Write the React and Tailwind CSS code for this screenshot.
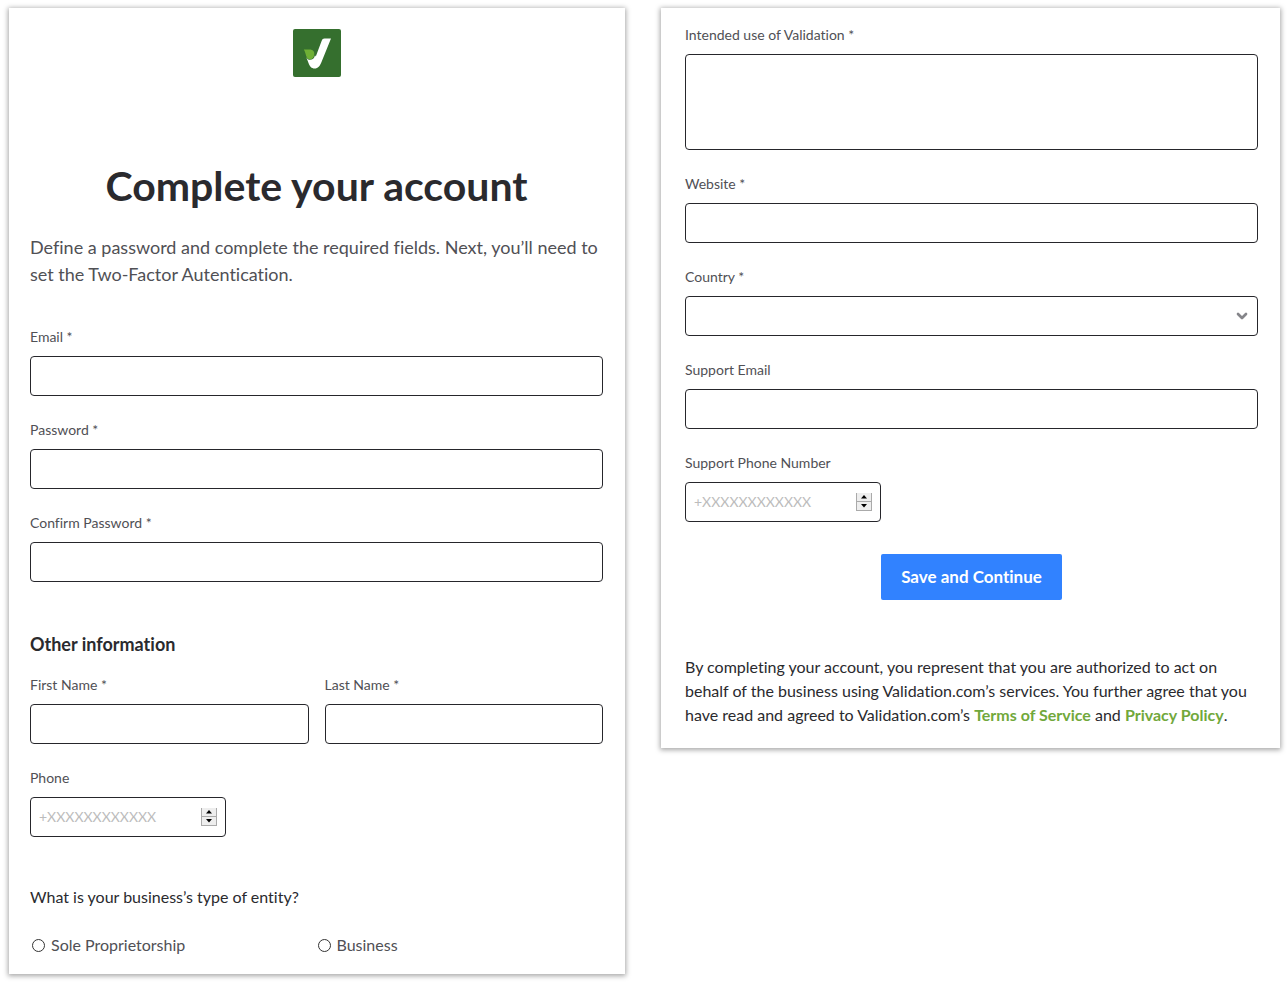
import { useId } from "react";
import { ChevronDown } from "lucide-react";

const control =
  "block w-full rounded border border-[#26262b] bg-white px-2 text-base text-[#2a2a2e] outline-none focus:border-[#3182ff]";

function Field({ label, children }) {
  const id = useId();
  return (
    <div className="flex flex-col gap-2.5">
      <label htmlFor={id} className="text-[14px] leading-[19px] text-[#505055]">
        {label}
      </label>
      {children(id)}
    </div>
  );
}

function TextField({ label, type = "text" }) {
  return (
    <Field label={label}>{(id) => <input id={id} type={type} className={`${control} h-10`} />}</Field>
  );
}

function Stepper({ label, up }) {
  return (
    <button
      type="button"
      aria-label={label}
      className="flex h-[9px] w-4 items-center justify-center border-x border-b border-[#aaaaaa] bg-[#eeeeee]"
    >
      <svg width="6" height="4" viewBox="0 0 6 4" fill="#000" aria-hidden="true">
        {up ? <path d="M3 0 6 3.5H0Z" /> : <path d="M0 0H6L3 3.5Z" />}
      </svg>
    </button>
  );
}

function PhoneField({ label }) {
  return (
    <Field label={label}>
      {(id) => (
        <div className="flex h-10 w-[196px] items-center rounded border border-[#26262b] px-2">
          <input
            id={id}
            type="tel"
            placeholder="+XXXXXXXXXXXX"
            className="h-5 min-w-0 flex-1 text-[14px] leading-5 text-[#2a2a2e] outline-none placeholder:text-[#bcbcbc]"
          />
          <div className="flex flex-col">
            <Stepper label="Increase" up />
            <Stepper label="Decrease" />
          </div>
        </div>
      )}
    </Field>
  );
}

function Radio({ label }) {
  return (
    <label className="flex items-center gap-1.5 text-base leading-6 text-[#505055]">
      <input
        type="radio"
        name="entity"
        className="size-[13px] appearance-none rounded-full border border-[#333333] bg-white checked:border-4"
      />
      {label}
    </label>
  );
}

function Logo() {
  return (
    <svg className="size-12" viewBox="0 0 48 48" role="img" aria-label="Validation">
      <rect width="48" height="48" rx="2" fill="#356f2e" />
      <path
        d="M31.5 9.5H38L28.5 33C26.8 37.3 25 39.5 21.7 39.5C18.3 39.5 16.8 37.3 15.5 34L13.2 28C14.2 30 15.4 30.8 17 30.8C19.5 30.8 21.4 29.2 22 26.2L22.8 27.5L28.6 12C29.2 10.3 30 9.5 31.5 9.5Z"
        fill="#fff"
      />
      <path
        d="M10.8 20.6H16.6C20 20.6 21.5 22.8 21.3 25.2C21.1 28.2 19.3 30.3 17 30.3C14.8 30.3 13.9 29 13.2 27C12.5 25 12.1 22.4 10.8 20.6Z"
        fill="#6faf35"
      />
    </svg>
  );
}

const panel = "bg-white pr-[22px] shadow-[0_1px_5px_1px_rgba(0,0,0,0.35)]";

export default function App() {
  return (
    <form
      className="grid min-h-screen grid-cols-1 items-start gap-9 bg-white py-2 pr-2 pl-[9px] font-['Lato','Open_Sans',sans-serif] [font-variant-ligatures:none] md:grid-cols-[616fr_619fr]"
      onSubmit={(e) => e.preventDefault()}
    >
      <section className={`${panel} pt-[21px] pb-[17px] pl-[21px]`}>
        <div className="flex justify-center">
          <Logo />
        </div>
        <h1 className="mt-20 text-center text-[41px] leading-[58px] font-bold text-[#2a2a2e]">
          Complete your account
        </h1>
        <p className="mt-[19px] text-[18px] leading-[27px] text-[#505055]">
          Define a password and complete the required fields. Next, you’ll need to set the Two-Factor
          Autentication.
        </p>

        <div className="mt-[39px] flex flex-col gap-6">
          <TextField label="Email *" type="email" />
          <TextField label="Password *" type="password" />
          <TextField label="Confirm Password *" type="password" />
        </div>

        <h2 className="mt-12 mb-[17px] text-[18px] leading-[28px] font-bold text-[#2a2a2e]">
          Other information
        </h2>
        <div className="flex flex-col gap-6">
          <div className="grid grid-cols-2 gap-4">
            <TextField label="First Name *" />
            <TextField label="Last Name *" />
          </div>
          <PhoneField label="Phone" />
        </div>

        <fieldset className="mt-12">
          <legend className="text-base leading-6 text-[#2a2a2e]">
            What is your business’s type of entity?
          </legend>
          <div className="mt-6 grid grid-cols-2 pl-0.5">
            <Radio label="Sole Proprietorship" />
            <Radio label="Business" />
          </div>
        </fieldset>
      </section>

      <section className={`${panel} pt-[17px] pb-[21px] pl-6`}>
        <div className="flex flex-col gap-6">
          <Field label="Intended use of Validation *">
            {(id) => <textarea id={id} className={`${control} h-24 resize-none py-2`} />}
          </Field>
          <TextField label="Website *" type="url" />
          <Field label="Country *">
            {(id) => (
              <div className="relative">
                <select id={id} defaultValue="" className={`${control} h-10 appearance-none`}>
                  <option value=""></option>
                  <option>Canada</option>
                  <option>United States</option>
                </select>
                <ChevronDown
                  className="pointer-events-none absolute top-3 right-2 size-4 text-[#85858a]"
                  strokeWidth={4}
                  aria-hidden="true"
                />
              </div>
            )}
          </Field>
          <TextField label="Support Email" type="email" />
          <PhoneField label="Support Phone Number" />
        </div>

        <div className="mt-8 flex justify-center">
          <button
            type="submit"
            className="rounded-xs bg-[#3182ff] px-5 py-[11px] text-[17px] leading-6 font-bold text-white"
          >
            Save and Continue
          </button>
        </div>

        <p className="mt-[55px] text-base leading-6 text-[#2a2a2e]">
          By completing your account, you represent that you are authorized to act on behalf of the
          business using Validation.com’s services. You further agree that you have read and agreed to
          Validation.com’s{" "}
          <a href="#terms" className="font-bold text-[#71a83b]">
            Terms of Service
          </a>{" "}
          and{" "}
          <a href="#privacy" className="font-bold text-[#71a83b]">
            Privacy Policy
          </a>
          .
        </p>
      </section>
    </form>
  );
}
